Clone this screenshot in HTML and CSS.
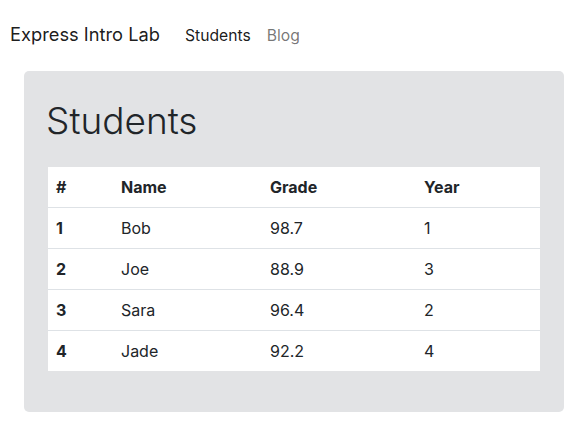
FILE: index.html
```html
<!DOCTYPE html>
<html>
<head>
<meta charset="utf-8">
<link rel="stylesheet" href="styles.css">
</head>
<body>
<nav class="navbar">
  <a class="brand" href="#">Express Intro Lab</a>
  <ul class="nav">
    <li><a class="nav-link active" href="#">Students</a></li>
    <li><a class="nav-link" href="#">Blog</a></li>
  </ul>
</nav>
<main class="container">
  <section class="jumbotron">
    <h1 class="title">Students</h1>
    <table class="table">
      <thead>
        <tr><th class="c1">#</th><th class="c2">Name</th><th class="c3">Grade</th><th class="c4">Year</th></tr>
      </thead>
      <tbody>
        <tr><th>1</th><td>Bob</td><td>98.7</td><td>1</td></tr>
        <tr><th>2</th><td>Joe</td><td>88.9</td><td>3</td></tr>
        <tr><th>3</th><td>Sara</td><td>96.4</td><td>2</td></tr>
        <tr><th>4</th><td>Jade</td><td>92.2</td><td>4</td></tr>
      </tbody>
    </table>
  </section>
</main>
</body>
</html>
```
FILE: styles.css
```css
html, body {
  margin: 0;
  padding: 0;
  background: #fff;
}
body {
  font-family: Inter, "Liberation Sans", sans-serif;
  font-size: 16px;
  color: #212529;
}
.navbar {
  display: flex;
  align-items: baseline;
  padding: 22px 10px 0;
  height: 25px;
}
.brand {
  font-size: 18.3px;
  line-height: 25px;
  color: rgba(0,0,0,.9);
  text-decoration: none;
  margin-right: 17px;
}
.nav {
  display: flex;
  list-style: none;
  margin: 0;
  padding: 0;
}
.nav-link {
  display: block;
  padding: 0 8px;
  font-size: 15.7px;
  line-height: 22px;
  color: rgba(0,0,0,.55);
  text-decoration: none;
}
.nav-link.active {
  color: rgba(0,0,0,.9);
}
.container {
  padding: 24px 21px 0 24px;
}
.jumbotron {
  background: #e2e3e5;
  border-radius: 5px;
  padding: 26px 24px 41px;
}
.title {
  margin: 0 0 22px -2px;
  font-size: 37px;
  font-weight: 300;
  line-height: 48px;
}
.table {
  width: 100%;
  border-collapse: collapse;
  background: #fff;
}
.table th, .table td {
  text-align: left;
  padding: 10px 8px;
  line-height: 20px;
  vertical-align: top;
}
.table th { font-weight: 700; }
.table tbody tr { border-top: 1px solid #dee2e6; }
.c1 { width: 49px; }
.c2 { width: 133px; }
.c3 { width: 138px; }
```
